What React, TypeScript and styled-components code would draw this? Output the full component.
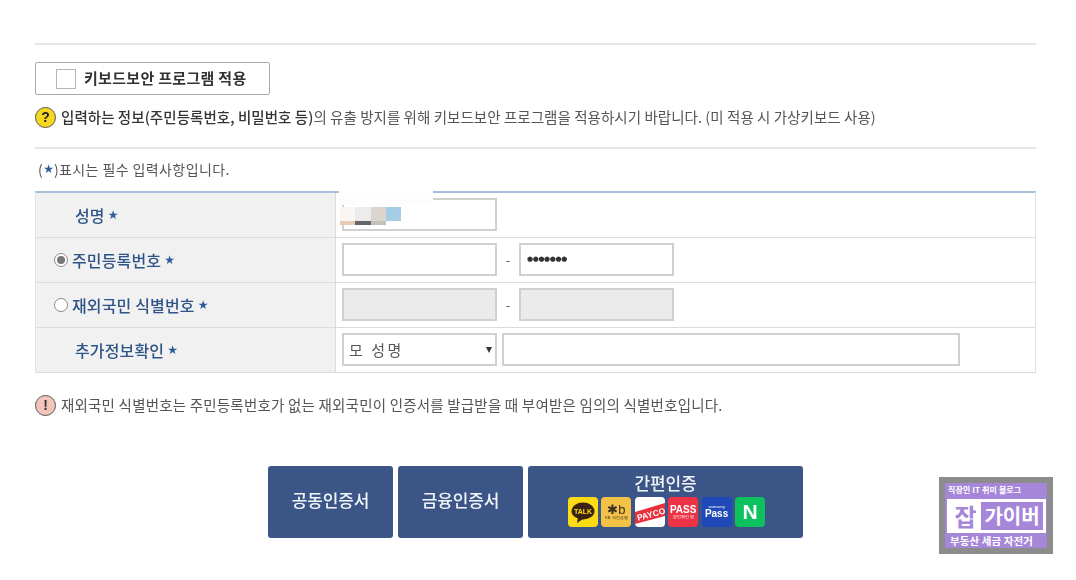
import React from 'react';
import styled, { createGlobalStyle } from 'styled-components';

const GlobalStyle = createGlobalStyle`
  html, body {
    margin: 0;
    padding: 0;
    background: #fff;
  }
  body {
    font-family: "Noto Sans CJK KR", "Liberation Sans", sans-serif;
    color: #333;
  }
`;

const Page = styled.div`
  position: relative;
  width: 1076px;
  height: 580px;
  overflow: hidden;
  box-sizing: border-box;
  padding: 43px 40px 0 35px;
  filter: blur(0.5px);
`;

const Rule = styled.div<{ $top?: number }>`
  height: 2px;
  margin-top: ${p => p.$top ?? 0}px;
  background: #e6e6e6;
`;

const KeyboardButton = styled.div`
  box-sizing: border-box;
  width: 235px;
  height: 33px;
  margin-top: 17px;
  border: 1px solid #a9a9a9;
  border-radius: 2px;
  display: flex;
  align-items: center;
  padding: 0 0 2px 20px;
  gap: 8px;
  font-size: 15px;
  font-weight: 700;
  letter-spacing: 0.3px;
  color: #333;
`;

const CheckBox = styled.span`
  box-sizing: border-box;
  width: 20px;
  height: 20px;
  margin-top: 2px;
  border: 1px solid #b5b5b5;
  background: #fff;
`;

const Notice = styled.div<{ $top: number; $track: number }>`
  display: flex;
  align-items: center;
  height: 24px;
  margin-top: ${p => p.$top}px;
  gap: 5px;
  font-size: 14.5px;
  letter-spacing: ${p => p.$track}px;
  white-space: nowrap;
  color: #555;

  b {
    font-weight: 500;
    color: #333;
  }
`;

const NoticeText = styled.span`
  margin-bottom: 2px;
`;

const QuestionIcon = styled.span`
  box-sizing: border-box;
  width: 21px;
  height: 21px;
  border-radius: 50%;
  background: #f7d81e;
  border: 1.5px solid #555;
  color: #222;
  display: flex;
  align-items: center;
  justify-content: center;
  font-family: "Liberation Sans", sans-serif;
  font-weight: 700;
  font-size: 14px;
  letter-spacing: 0;
`;

const AlertIcon = styled(QuestionIcon)`
  background: #f4c4bc;
  color: #333;
`;

const RequiredNote = styled.div`
  height: 22px;
  margin-top: 9px;
  padding-left: 3px;
  display: flex;
  align-items: center;
  font-size: 14px;
  letter-spacing: 0.4px;
  color: #555;
`;

const Star = styled.span<{ $size?: number }>`
  color: #2c5a9c;
  font-family: "DejaVu Sans", sans-serif;
  font-size: ${p => p.$size ?? 12}px;
  font-weight: 700;
  letter-spacing: 0;
`;

const FormTable = styled.div`
  position: relative;
  margin-top: 11px;
  border-top: 2px solid #a9bedd;
  border-left: 1px solid #e2e2e2;
  border-right: 1px solid #e2e2e2;
`;

const Row = styled.div`
  display: grid;
  grid-template-columns: 300px 1fr;
  height: 45px;
  box-sizing: border-box;
  border-bottom: 1px solid #dcdcdc;
`;

const LabelCell = styled.div<{ $indent: number }>`
  background: #f1f1f1;
  border-right: 1px solid #dcdcdc;
  display: flex;
  align-items: center;
  gap: 3px;
  padding-left: ${p => p.$indent}px;
  font-size: 16px;
  font-weight: 500;
  letter-spacing: 0.15px;
  color: #2f5487;
  white-space: nowrap;
`;

const Radio = styled.span<{ $on?: boolean }>`
  box-sizing: border-box;
  width: 14px;
  height: 14px;
  border-radius: 50%;
  border: 1px solid #8a8a8a;
  background: #fff;
  display: flex;
  align-items: center;
  justify-content: center;
  margin-right: 1px;

  &::after {
    content: '';
    display: ${p => (p.$on ? 'block' : 'none')};
    width: 8px;
    height: 8px;
    border-radius: 50%;
    background: #777;
  }
`;

const FieldCell = styled.div`
  display: flex;
  align-items: center;
  padding: 0 0 1px 6px;
`;

const Field = styled.div<{ $w: number; $off?: boolean }>`
  box-sizing: border-box;
  width: ${p => p.$w}px;
  height: 33px;
  border: 2px solid #d0d0d0;
  background: ${p => (p.$off ? '#ebebeb' : '#fff')};
  display: flex;
  align-items: center;
  padding-left: 6px;
  color: #333;
`;

const Dash = styled.span`
  width: 22px;
  text-align: center;
  font-size: 13px;
  color: #555;
`;

const Dots = styled.span`
  font-family: "DejaVu Sans", sans-serif;
  font-size: 7px;
  letter-spacing: -0.4px;
  color: #333;
  line-height: 1;
`;

const SelectBox = styled(Field)`
  justify-content: space-between;
  padding: 0 3px 0 5px;
  margin-right: 5px;
  font-size: 15px;
  letter-spacing: 2.5px;
  color: #555;
`;

const Caret = styled.span`
  width: 0;
  height: 0;
  border-left: 3.5px solid transparent;
  border-right: 3.5px solid transparent;
  border-top: 6px solid #333;
`;

const HiddenName = styled.div`
  position: absolute;
  left: 303px;
  top: -2px;
  width: 94px;
  height: 14px;
  background: #fdfdfd;
`;

const Mosaic = styled.div`
  position: absolute;
  left: 304px;
  top: 14px;
  display: flex;
`;

const MosaicTile = styled.span<{ $bg: string; $line: string }>`
  width: 15.25px;
  height: 18px;
  background: linear-gradient(${p => p.$bg} 80%, ${p => p.$line} 80%);
`;

const Actions = styled.div`
  display: flex;
  gap: 5px;
  margin: 49px 0 0 233px;
`;

const AuthButton = styled.div<{ $w: number }>`
  box-sizing: border-box;
  width: ${p => p.$w}px;
  height: 72px;
  padding-bottom: 5px;
  border-radius: 3px;
  background: #3b5686;
  color: #f0f3f8;
  display: flex;
  flex-direction: column;
  align-items: center;
  justify-content: center;
  font-size: 17px;
  font-weight: 500;
  letter-spacing: -0.1px;
`;

const EasyTitle = styled.div`
  line-height: 20px;
  margin-bottom: 4px;
`;

const Logos = styled.div`
  display: flex;
  gap: 3.4px;
  margin-left: 2px;
`;

const Logo = styled.span<{ $bg: string }>`
  width: 30px;
  height: 30px;
  border-radius: 4px;
  overflow: hidden;
  background: ${p => p.$bg};
  display: flex;
  flex-direction: column;
  align-items: center;
  justify-content: center;
  font-family: "Liberation Sans", sans-serif;
  letter-spacing: 0;
  color: #fff;
  line-height: 1;
`;

const TinyText = styled.span<{ $size: number; $weight?: number; $color?: string }>`
  font-size: ${p => p.$size}px;
  font-weight: ${p => p.$weight ?? 400};
  color: ${p => p.$color ?? '#fff'};
`;

const Watermark = styled.div`
  position: absolute;
  left: 939px;
  top: 477px;
  box-sizing: border-box;
  width: 114px;
  height: 77px;
  border: 6px solid #8c8c8c;
  background: #a586d8;
  color: #fff;
  display: flex;
  flex-direction: column;
  font-weight: 700;
`;

const WatermarkLine = styled.div<{ $size: number; $h: number; $track: number; $left: number }>`
  font-size: ${p => p.$size}px;
  line-height: ${p => p.$h}px;
  height: ${p => p.$h}px;
  padding-left: ${p => p.$left}px;
  letter-spacing: ${p => p.$track}px;
  white-space: nowrap;
`;

const WatermarkBrand = styled.div`
  box-sizing: border-box;
  width: 99px;
  height: 34px;
  margin: 2px 0 0 2px;
  background: #fff;
  border: 3px solid #fff;
  display: flex;
  align-items: stretch;
`;

const BrandMark = styled.span`
  width: 31px;
  display: flex;
  align-items: center;
  justify-content: center;
  color: #a586d8;
  font-size: 24px;
  line-height: 1;
`;

const BrandName = styled.span`
  flex: 1;
  background: #a586d8;
  color: #fff;
  display: flex;
  align-items: center;
  justify-content: center;
  font-size: 20px;
  line-height: 1;
`;

const App: React.FC = () => {
  return (
    <Page>
      <GlobalStyle />
      <Rule />
      <KeyboardButton>
        <CheckBox />
        키보드보안 프로그램 적용
      </KeyboardButton>
      <Notice $top={10} $track={0.05}>
        <QuestionIcon>?</QuestionIcon>
        <NoticeText>
          <b>입력하는 정보(주민등록번호, 비밀번호 등)</b>의 유출 방지를 위해 키보드보안 프로그램을 적용하시기 바랍니다. (미 적용 시 가상키보드 사용)
        </NoticeText>
      </Notice>
      <Rule $top={18} />
      <RequiredNote>
        (<Star>★</Star>)표시는 필수 입력사항입니다.
      </RequiredNote>

      <FormTable>
        <Row>
          <LabelCell $indent={39}>성명 <Star>★</Star></LabelCell>
          <FieldCell>
            <Field $w={155} />
          </FieldCell>
        </Row>
        <Row>
          <LabelCell $indent={18}>
            <Radio $on />
            주민등록번호 <Star>★</Star>
          </LabelCell>
          <FieldCell>
            <Field $w={155} />
            <Dash>-</Dash>
            <Field $w={155}>
              <Dots>●●●●●●●</Dots>
            </Field>
          </FieldCell>
        </Row>
        <Row>
          <LabelCell $indent={18}>
            <Radio />
            재외국민 식별번호 <Star>★</Star>
          </LabelCell>
          <FieldCell>
            <Field $w={155} $off />
            <Dash>-</Dash>
            <Field $w={155} $off />
          </FieldCell>
        </Row>
        <Row>
          <LabelCell $indent={39}>추가정보확인 <Star>★</Star></LabelCell>
          <FieldCell>
            <SelectBox $w={155}>
              모 성명
              <Caret />
            </SelectBox>
            <Field $w={458} />
          </FieldCell>
        </Row>
        <HiddenName />
        <Mosaic>
          <MosaicTile $bg="#faf6f1" $line="#e6cdb8" />
          <MosaicTile $bg="#ececec" $line="#666" />
          <MosaicTile $bg="#dcd5cd" $line="#c4c0ba" />
          <MosaicTile $bg="#a6cde6" $line="transparent" />
        </Mosaic>
      </FormTable>

      <Notice $top={20} $track={0.2}>
        <AlertIcon>!</AlertIcon>
        <NoticeText>재외국민 식별번호는 주민등록번호가 없는 재외국민이 인증서를 발급받을 때 부여받은 임의의 식별번호입니다.</NoticeText>
      </Notice>

      <Actions>
        <AuthButton $w={125}>공동인증서</AuthButton>
        <AuthButton $w={125}>금융인증서</AuthButton>
        <AuthButton $w={275}>
          <EasyTitle>간편인증</EasyTitle>
          <Logos>
            <Logo $bg="#fbdc14">
              <svg width="26" height="24" viewBox="0 0 26 24">
                <ellipse cx="13" cy="11" rx="11.5" ry="8.5" fill="#3b2314" />
                <path d="M8 17 L7 23 L13 19 Z" fill="#3b2314" />
                <text x="13" y="13.5" textAnchor="middle" fontSize="7" fontWeight="700" fill="#fbdc14" fontFamily="Liberation Sans">TALK</text>
              </svg>
            </Logo>
            <Logo $bg="#f3c246">
              <TinyText $size={13} $weight={400} $color="#3a3226">✱b</TinyText>
              <TinyText $size={4} $color="#3a3226">KB 국민은행</TinyText>
            </Logo>
            <Logo $bg="#fff">
              <svg width="30" height="30" viewBox="0 0 30 30">
                <path d="M0 15 L30 6 L30 19 L0 27 Z" fill="#e8313a" />
                <text x="16" y="20.5" textAnchor="middle" fontSize="8.5" fontWeight="700" fill="#fff" fontFamily="Liberation Sans" transform="rotate(-15 15 17)">PAYCO</text>
              </svg>
            </Logo>
            <Logo $bg="#ee3347">
              <TinyText $size={10} $weight={700}>PASS</TinyText>
              <TinyText $size={4}>본인확인 앱</TinyText>
            </Logo>
            <Logo $bg="#1f49b8">
              <TinyText $size={4}>samsung</TinyText>
              <TinyText $size={10} $weight={700}>Pass</TinyText>
            </Logo>
            <Logo $bg="#0cc15e">
              <TinyText $size={21} $weight={700}>N</TinyText>
            </Logo>
          </Logos>
        </AuthButton>
      </Actions>

      <Watermark>
        <WatermarkLine $size={8} $h={14} $track={0.1} $left={3}>직장인 IT 취미 블로그</WatermarkLine>
        <WatermarkBrand>
          <BrandMark>잡</BrandMark>
          <BrandName>가이버</BrandName>
        </WatermarkBrand>
        <WatermarkLine $size={10.5} $h={15} $track={0.1} $left={5}>부동산 세금 자전거</WatermarkLine>
      </Watermark>
    </Page>
  );
};

export default App;
